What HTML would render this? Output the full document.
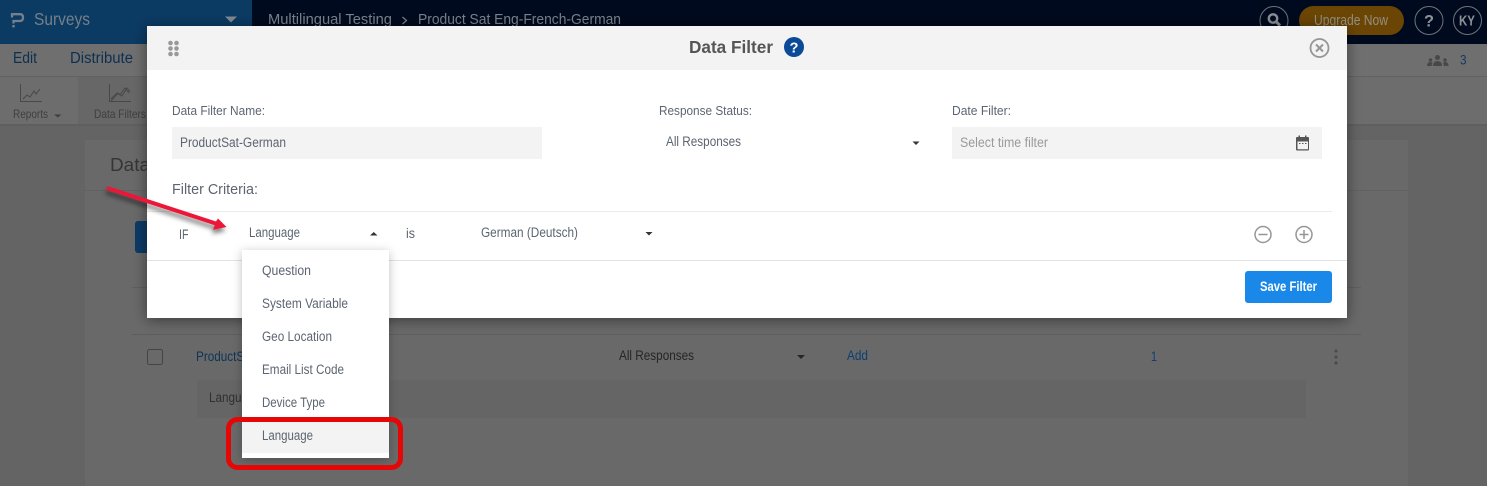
<!DOCTYPE html>
<html><head><meta charset="utf-8"><title>Data Filter</title>
<style>
html,body{margin:0;padding:0;background:#686868;width:1487px;height:486px;overflow:hidden}
svg{display:block}
text{font-family:"Liberation Sans",sans-serif;white-space:pre}
</style></head><body>
<svg width="1487" height="486" viewBox="0 0 1487 486" xmlns="http://www.w3.org/2000/svg">
<defs>
<filter id="ms" x="-5%" y="-10%" width="110%" height="125%"><feDropShadow dx="0" dy="2" stdDeviation="7" flood-color="#000" flood-opacity=".45"/></filter>
<filter id="ds" x="-20%" y="-10%" width="140%" height="120%"><feDropShadow dx="0" dy="2" stdDeviation="5" flood-color="#000" flood-opacity=".25"/></filter>
<filter id="as" x="-20%" y="-30%" width="140%" height="170%"><feDropShadow dx="-1" dy="4" stdDeviation="2.5" flood-color="#000" flood-opacity=".5"/></filter>
</defs>
<!-- background -->
<rect width="1487" height="486" fill="#646464"/>
<rect x="85" y="140" width="1323" height="346" fill="#696969"/>
<rect x="85" y="190" width="1323" height="1" fill="#616161"/>
<rect x="0" y="0" width="252" height="44" fill="#0b3a63"/>
<rect x="252" y="0" width="1235" height="44" fill="#000a1e"/>
<rect x="0" y="44" width="1487" height="32" fill="#6f6f6f"/>
<rect x="0" y="76" width="1487" height="1" fill="#626262"/>
<rect x="0" y="77" width="1487" height="47" fill="#6d6d6d"/>
<rect x="78" y="77" width="69" height="47" fill="#676767"/>
<rect x="0" y="124" width="1487" height="2" fill="#5f5f5f"/>
<!-- logo -->
<path d="M12 17.500v-3.300h8q3 0 3 3.300t-3 3.500h-6.500v2.500" fill="none" stroke="#76808a" stroke-width="2.300"/>
<rect x="12.300" y="25" width="2.400" height="2.400" fill="#76808a"/>
<text x="34" y="25" font-size="17.500" fill="#76808a" textLength="56" lengthAdjust="spacingAndGlyphs">Surveys</text>
<path d="M225 16.500h12l-6 6z" fill="#7f8992"/>
<text x="268" y="24" font-size="15" fill="#79838c" textLength="124" lengthAdjust="spacingAndGlyphs">Multilingual Testing</text>
<path d="M402.500 17l4 3.500-4 3.500" fill="none" stroke="#79838c" stroke-width="1.200"/>
<text x="418" y="24" font-size="15" fill="#79838c" textLength="203" lengthAdjust="spacingAndGlyphs">Product Sat Eng-French-German</text>
<!-- top right -->
<circle cx="1274" cy="20.500" r="14" fill="none" stroke="#6f7377" stroke-width="1"/>
<circle cx="1273" cy="18.500" r="4.200" fill="none" stroke="#8a8f93" stroke-width="2.400"/>
<path d="M1276 21.500l4 4" stroke="#8a8f93" stroke-width="3"/>
<rect x="1299" y="6" width="105" height="29" rx="14.500" fill="#6b4503"/>
<text x="1314" y="25" font-size="14.500" fill="#94907f" textLength="74" lengthAdjust="spacingAndGlyphs">Upgrade Now</text>
<circle cx="1429" cy="20.500" r="14" fill="none" stroke="#6f7377" stroke-width="1"/>
<text x="1424" y="26.500" font-size="17" font-weight="700" fill="#8e9296" textLength="10" lengthAdjust="spacingAndGlyphs">?</text>
<circle cx="1467.500" cy="20.500" r="14" fill="none" stroke="#6f7377" stroke-width="1"/>
<text x="1459" y="25.500" font-size="14.500" font-weight="700" fill="#8e9296" textLength="16" lengthAdjust="spacingAndGlyphs">KY</text>
<!-- people -->
<g fill="#484848"><circle cx="1437.500" cy="57.500" r="2.500"/><path d="M1433 66q0-5 4.500-5t4.500 5z"/><circle cx="1430.500" cy="60" r="1.700"/><path d="M1427 66q0-4 3.500-4l2 .5-1 3.500z"/><circle cx="1445" cy="60" r="1.700"/><path d="M1448.500 66q0-4-3.500-4l-2 .5 1 3.500z"/></g>
<text x="1460" y="64.500" font-size="14" fill="#123a63" textLength="6.500" lengthAdjust="spacingAndGlyphs">3</text>
<!-- menu -->
<text x="13" y="63" font-size="15.500" fill="#0d2f50" textLength="24" lengthAdjust="spacingAndGlyphs">Edit</text>
<text x="70" y="63" font-size="15.500" fill="#0d2f50" textLength="63" lengthAdjust="spacingAndGlyphs">Distribute</text>
<!-- toolbar -->
<g fill="none" stroke="#484848" stroke-width="1"><path d="M20.500 84v17.500h21.500"/><path d="M23 99l4-4 3 2 4-6 2 3 4-5"/>
<path d="M109.500 84v17.500h21.500"/><path d="M111 99l6-6 3 2 5-7 4 5"/><path d="M111 101l7-8 4 3 5-8 3 4"/></g>
<text x="13" y="118" font-size="12" fill="#3f3f3f" textLength="35" lengthAdjust="spacingAndGlyphs">Reports</text>
<path d="M54 114.500h7.500l-3.750 3z" fill="#3f3f3f"/>
<text x="94" y="118" font-size="12" fill="#3f3f3f" textLength="52" lengthAdjust="spacingAndGlyphs">Data Filters</text>
<!-- card behind -->
<text x="110" y="171" font-size="18" fill="#353535" textLength="40" lengthAdjust="spacingAndGlyphs">Data</text>
<rect x="135" y="221" width="20" height="32" rx="3" fill="#0c3a66"/>
<rect x="132" y="287" width="1229" height="1" fill="#5f5f5f"/>
<rect x="132" y="334" width="1229" height="1" fill="#5d5d5d"/>
<rect x="147.500" y="349.500" width="15" height="15" rx="2" fill="none" stroke="#444" stroke-width="1"/>
<text x="196" y="361" font-size="13.500" fill="#0d3458" textLength="58" lengthAdjust="spacingAndGlyphs">ProductSat</text>
<text x="619" y="360" font-size="13.500" fill="#262626" textLength="75" lengthAdjust="spacingAndGlyphs">All Responses</text>
<path d="M797 355h8l-4 4z" fill="#262626"/>
<text x="847" y="360" font-size="13.500" fill="#0d3f70" textLength="21" lengthAdjust="spacingAndGlyphs">Add</text>
<text x="1151" y="361" font-size="13.500" fill="#0d3f70" textLength="6" lengthAdjust="spacingAndGlyphs">1</text>
<g fill="#484848"><circle cx="1336" cy="351" r="1.500"/><circle cx="1336" cy="357" r="1.500"/><circle cx="1336" cy="363" r="1.500"/></g>
<rect x="197" y="380" width="1109" height="38" fill="#656565"/>
<text x="209" y="402" font-size="13.500" fill="#303030" textLength="52" lengthAdjust="spacingAndGlyphs">Language</text>
<!-- modal -->
<rect x="147" y="26" width="1200" height="292" fill="#fff" filter="url(#ms)"/>
<rect x="147" y="26" width="1200" height="44" fill="#f3f3f3"/>
<g fill="#999"><circle cx="170.500" cy="43" r="2.300"/><circle cx="176.500" cy="43" r="2.300"/><circle cx="170.500" cy="48.500" r="2.300"/><circle cx="176.500" cy="48.500" r="2.300"/><circle cx="170.500" cy="54" r="2.300"/><circle cx="176.500" cy="54" r="2.300"/></g>
<text x="689" y="53" font-size="17.500" font-weight="700" fill="#555" textLength="84" lengthAdjust="spacingAndGlyphs">Data Filter</text>
<circle cx="794" cy="47" r="10" fill="#0a4a96"/>
<text x="789.500" y="52.500" font-size="15" font-weight="700" fill="#fff" textLength="9" lengthAdjust="spacingAndGlyphs">?</text>
<circle cx="1319.500" cy="48" r="9" fill="none" stroke="#969696" stroke-width="1.800"/>
<path d="M1316 44.500l7 7M1323 44.500l-7 7" stroke="#969696" stroke-width="2"/>
<text x="172" y="115" font-size="13" fill="#5c6570" textLength="93" lengthAdjust="spacingAndGlyphs">Data Filter Name:</text>
<text x="659" y="115" font-size="13" fill="#5c6570" textLength="93" lengthAdjust="spacingAndGlyphs">Response Status:</text>
<text x="952" y="115" font-size="13" fill="#5c6570" textLength="59" lengthAdjust="spacingAndGlyphs">Date Filter:</text>
<rect x="172" y="127" width="370" height="32" fill="#f3f3f3"/>
<text x="180" y="147" font-size="13.500" fill="#5c6570" textLength="106" lengthAdjust="spacingAndGlyphs">ProductSat-German</text>
<text x="666" y="146" font-size="13.500" fill="#5c6570" textLength="75" lengthAdjust="spacingAndGlyphs">All Responses</text>
<path d="M912.500 141.500h7l-3.500 3.500z" fill="#333"/>
<rect x="952" y="127" width="370" height="32" fill="#f3f3f3"/>
<text x="960" y="147" font-size="13.500" fill="#9a9a9a" textLength="88" lengthAdjust="spacingAndGlyphs">Select time filter</text>
<path d="M1297 137h1.500v-1.500h1.500v1.500h5v-1.500h1.500v1.500h1.500q1 0 1 1v11.500q0 1-1 1h-11q-1 0-1-1v-11.500q0-1 1-1zM1297.500 141.500v7.700h10.500v-7.700z" fill="#555" fill-rule="evenodd"/>
<path d="M1299 143.500h1.500M1302 143.500h1.500M1305 143.500h1.500" stroke="#555" stroke-width="1"/>
<text x="172" y="194" font-size="15" fill="#5c6570" textLength="86" lengthAdjust="spacingAndGlyphs">Filter Criteria:</text>
<rect x="147" y="211" width="1185" height="1" fill="#ebebeb"/>
<text x="179" y="239" font-size="13.500" fill="#5c6570" textLength="9.500" lengthAdjust="spacingAndGlyphs">IF</text>
<text x="249" y="237" font-size="13.500" fill="#5c6570" textLength="51" lengthAdjust="spacingAndGlyphs">Language</text>
<path d="M370 235.500h7.500l-3.750-3.500z" fill="#333"/>
<text x="406" y="238" font-size="13.500" fill="#5c6570" textLength="9" lengthAdjust="spacingAndGlyphs">is</text>
<text x="481" y="237" font-size="13.500" fill="#5c6570" textLength="97" lengthAdjust="spacingAndGlyphs">German (Deutsch)</text>
<path d="M645.500 232h7l-3.500 3.500z" fill="#333"/>
<circle cx="1263" cy="234.500" r="8" fill="none" stroke="#969696" stroke-width="1.500"/>
<path d="M1258.500 234.500h9" stroke="#969696" stroke-width="1.500"/>
<circle cx="1304" cy="234.500" r="8" fill="none" stroke="#969696" stroke-width="1.500"/>
<path d="M1299.500 234.500h9M1304 230v9" stroke="#969696" stroke-width="1.500"/>
<rect x="147" y="260" width="1200" height="1" fill="#e3e3e3"/>
<rect x="1245" y="271" width="87" height="32" rx="3" fill="#1a88e8"/>
<text x="1260" y="291" font-size="14" font-weight="700" fill="#fff" textLength="57" lengthAdjust="spacingAndGlyphs">Save Filter</text>
<!-- dropdown -->
<rect x="242" y="250" width="147" height="208" fill="#fff" filter="url(#ds)"/>
<rect x="242" y="422" width="147" height="31" fill="#f3f3f3"/>
<g font-size="13.500" fill="#5c6570">
<text x="262" y="275" textLength="49" lengthAdjust="spacingAndGlyphs">Question</text>
<text x="262" y="308" textLength="86" lengthAdjust="spacingAndGlyphs">System Variable</text>
<text x="262" y="341" textLength="70" lengthAdjust="spacingAndGlyphs">Geo Location</text>
<text x="262" y="374" textLength="82" lengthAdjust="spacingAndGlyphs">Email List Code</text>
<text x="262" y="407" textLength="63" lengthAdjust="spacingAndGlyphs">Device Type</text>
<text x="262" y="440" textLength="51" lengthAdjust="spacingAndGlyphs">Language</text>
</g>
<!-- annotations -->
<rect x="228.500" y="419.500" width="172" height="48" rx="9" fill="none" stroke="#e50606" stroke-width="5"/>
<path d="M107.600 186.100L216 221.500 218 218.500 226.500 227 213 229.800 214.800 225.300 106.400 189.900z" fill="#ee1239" filter="url(#as)"/>
</svg>
</body></html>
